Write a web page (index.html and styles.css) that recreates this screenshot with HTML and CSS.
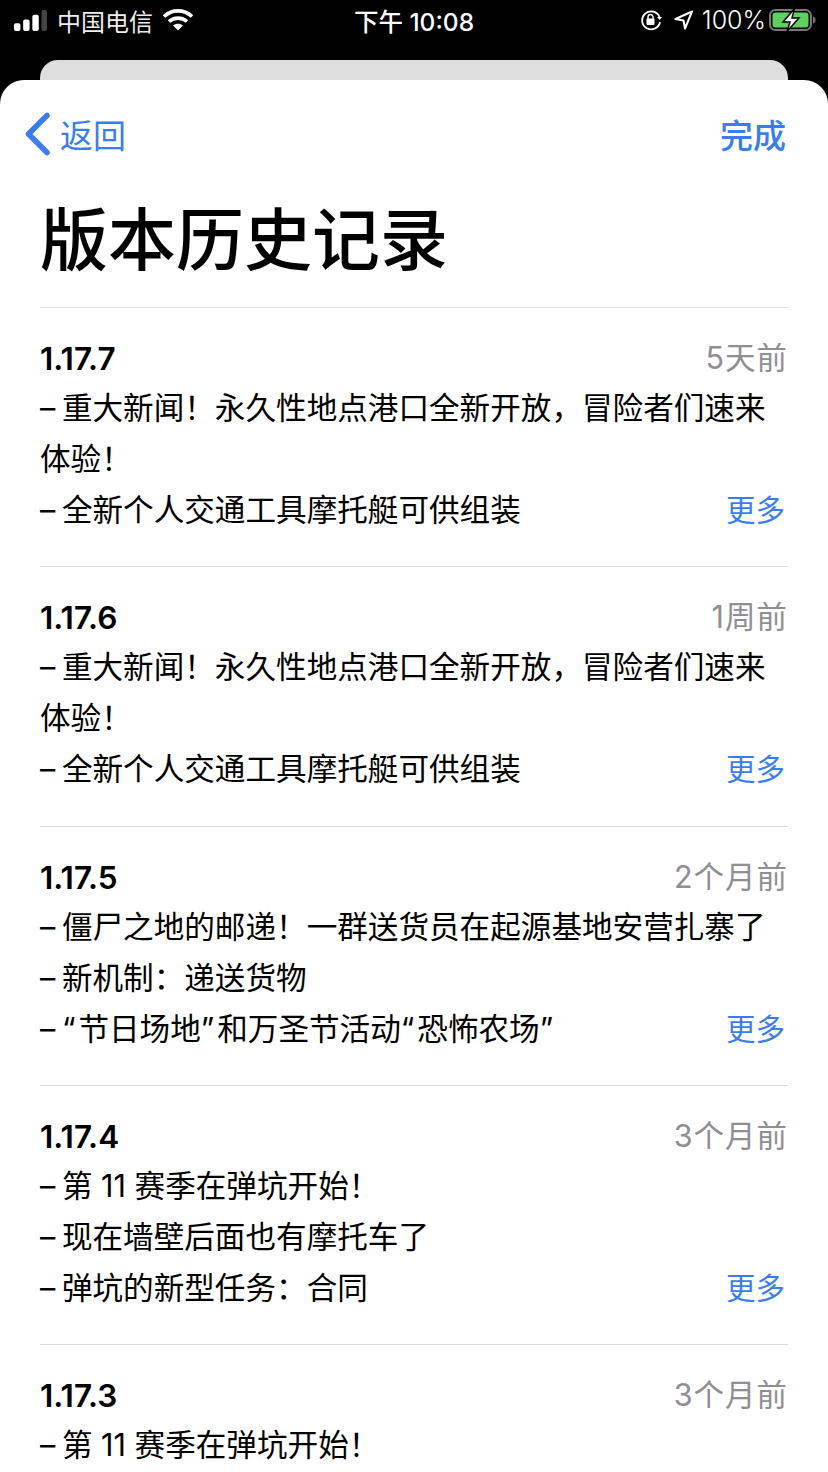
FILE: index.html
```html
<!DOCTYPE html>
<html lang="zh-CN">
<head>
<meta charset="UTF-8">
<meta name="viewport" content="width=device-width, initial-scale=1.0">
<title>版本历史记录</title>
<link rel="stylesheet" href="styles.css">
</head>
<body>

<div class="statusbar">
    <div class="status-left">
        <svg class="signal" width="33" height="21" viewBox="0 0 36 22" preserveAspectRatio="none">
            <rect x="0" y="14" width="7" height="8" rx="2" fill="#fff"/>
            <rect x="10" y="10" width="7" height="12" rx="2" fill="#fff"/>
            <rect x="20" y="5" width="7" height="17" rx="2" fill="#fff"/>
            <rect x="30" y="0" width="6" height="22" rx="2" fill="#444"/>
        </svg>
        <span class="carrier">中国电信</span>
        <svg class="wifi" width="30" height="22" viewBox="0 0 30 22">
            <path d="M1 7.500C9 0 21 0 29 7.500" fill="none" stroke="#fff" stroke-width="3.600"/>
            <path d="M6 12.500C11 8 19 8 24 12.500" fill="none" stroke="#fff" stroke-width="3.600"/>
            <path d="M10 16.500C13 14 17 14 20 16.500L15 21.500Z" fill="#fff"/>
        </svg>
    </div>
    <div class="status-time">下午 10:08</div>
    <div class="status-right">
        <svg class="rotation-lock" width="22" height="22" viewBox="0 0 22 22">
            <path d="M19.500 8A9 9 0 1 0 20 13" fill="none" stroke="#fff" stroke-width="1.800"/>
            <path d="M17 8L22 8L19.500 11Z" fill="#fff"/>
            <rect x="6.500" y="9.500" width="8" height="6.500" rx="1" fill="#fff"/>
            <path d="M8 10V8a2.500 2.500 0 0 1 5 0v2" fill="none" stroke="#fff" stroke-width="1.400"/>
        </svg>
        <svg class="arrow" width="19" height="20" viewBox="0 0 19 20">
            <path d="M18 1.500L1.500 9l8 1.500 1.500 8z" fill="none" stroke="#fff" stroke-width="2" stroke-linejoin="round"/>
        </svg>
        <span class="battery-pct">100%</span>
        <svg width="47" height="24" viewBox="0 0 47 24">
            <rect x="1" y="2" width="41" height="20" rx="5.500" fill="none" stroke="#777" stroke-width="2"/>
            <rect x="3.500" y="4.500" width="36" height="15" rx="3" fill="#5fd15f"/>
            <path d="M44 8.500c2 .5 2.500 1.500 2.500 3.500s-.5 3-2.500 3.500z" fill="#777"/>
            <path d="M25.500 0.500L14 14h7l-3 9.500L30 10h-7z" fill="#fff" stroke="#000" stroke-width="1.500"/>
        </svg>
    </div>
</div>

<div class="backcard"></div>

<div class="sheet">
    <div class="navbar">
        <a class="back">
            <svg width="28" height="44" viewBox="0 0 28 44">
                <path d="M23 3.500L4.500 22 23 40.500" fill="none" stroke="#3a7df0" stroke-width="5.500" stroke-linecap="round" stroke-linejoin="round"/>
            </svg>
            <span>返回</span>
        </a>
        <a class="done">完成</a>
    </div>

    <h1>版本历史记录</h1>

    <div class="release">
        <div class="release-head"><b>1.17.7</b><span class="ago">5天前</span></div>
        <div class="line"><i class="dash">–</i> 重大新闻！永久性地点港口全新开放，冒险者们速来</div>
        <div class="line">体验！</div>
        <div class="line last"><span><i class="dash">–</i> 全新个人交通工具摩托艇可供组装</span><a class="more">更多</a></div>
    </div>

    <div class="release">
        <div class="release-head"><b>1.17.6</b><span class="ago">1周前</span></div>
        <div class="line"><i class="dash">–</i> 重大新闻！永久性地点港口全新开放，冒险者们速来</div>
        <div class="line">体验！</div>
        <div class="line last"><span><i class="dash">–</i> 全新个人交通工具摩托艇可供组装</span><a class="more">更多</a></div>
    </div>

    <div class="release">
        <div class="release-head"><b>1.17.5</b><span class="ago">2个月前</span></div>
        <div class="line"><i class="dash">–</i> 僵尸之地的邮递！一群送货员在起源基地安营扎寨了</div>
        <div class="line"><i class="dash">–</i> 新机制：递送货物</div>
        <div class="line last"><span><i class="dash">–</i> <i class="quote">“</i>节日场地<i class="quote">”</i>和万圣节活动<i class="quote">“</i>恐怖农场<i class="quote">”</i></span><a class="more">更多</a></div>
    </div>

    <div class="release">
        <div class="release-head"><b>1.17.4</b><span class="ago">3个月前</span></div>
        <div class="line"><i class="dash">–</i> 第 11 赛季在弹坑开始！</div>
        <div class="line"><i class="dash">–</i> 现在墙壁后面也有摩托车了</div>
        <div class="line last"><span><i class="dash">–</i> 弹坑的新型任务：合同</span><a class="more">更多</a></div>
    </div>

    <div class="release">
        <div class="release-head"><b>1.17.3</b><span class="ago">3个月前</span></div>
        <div class="line"><i class="dash">–</i> 第 11 赛季在弹坑开始！</div>
    </div>
</div>

</body>
</html>
```

FILE: styles.css
```css
html, body {
    margin: 0;
    height: 1472px;
    overflow: hidden;
}
body {
    background-color: #000;
    font-family: Inter, "Noto Sans CJK SC", sans-serif;
    color: #000;
}
.statusbar {
    height: 40px;
    padding: 0 12px 0 14px;
    display: flex;
    align-items: center;
    justify-content: space-between;
    color: #fff;
    font-size: 24px;
}
.status-left, .status-right {
    display: flex;
    align-items: center;
}
.status-left {
    width: 228px;
}
.status-right {
    width: 230px;
    justify-content: flex-end;
    gap: 9px;
}
.carrier {
    margin-left: 10px;
    color: #eee;
}
.wifi {
    margin-left: 10px;
}
.status-time {
    font-size: 24.500px;
    font-weight: 500;
}
.rotation-lock {
    margin-right: 3px;
}
.battery-pct {
    margin-right: -6px;
    font-size: 25px;
    font-weight: 300;
}
.backcard {
    height: 20px;
    margin: 20px 40px 0;
    background-color: #dedede;
    border-radius: 18px 18px 0 0;
}
.sheet {
    height: 1392px;
    padding: 0 40px;
    background-color: #fff;
    border-radius: 24px 24px 0 0;
}
.navbar {
    height: 108px;
    margin: 0 2px 0 -16px;
    display: flex;
    align-items: center;
    justify-content: space-between;
    color: #3a7df0;
    font-size: 33px;
}
.back {
    display: flex;
    align-items: center;
    gap: 8px;
}
.done {
    font-weight: 500;
}
h1 {
    margin: 0;
    height: 119px;
    font-size: 68px;
    line-height: 105px;
    font-weight: 500;
}
.release {
    height: 259.250px;
    padding-top: 25px;
    box-sizing: border-box;
    border-top: 1px solid #ddd;
    font-size: 30.600px;
}
.release-head {
    height: 49px;
    line-height: 51px;
}
.line {
    height: 51px;
    line-height: 51px;
    white-space: nowrap;
}
.release-head, .last {
    display: flex;
    justify-content: space-between;
}
.release-head b {
    font-size: 31.500px;
    font-weight: 600;
}
.ago {
    color: #8e8e93;
    font-size: 30.500px;
    line-height: 49px;
    letter-spacing: 1px;
}
.dash {
    margin-right: -2px;
    font-style: normal;
}
.quote {
    font-style: normal;
    letter-spacing: 3px;
}
.more {
    margin-right: 3px;
    color: #3a7df0;
    font-size: 29.500px;
    line-height: 53px;
}
```
